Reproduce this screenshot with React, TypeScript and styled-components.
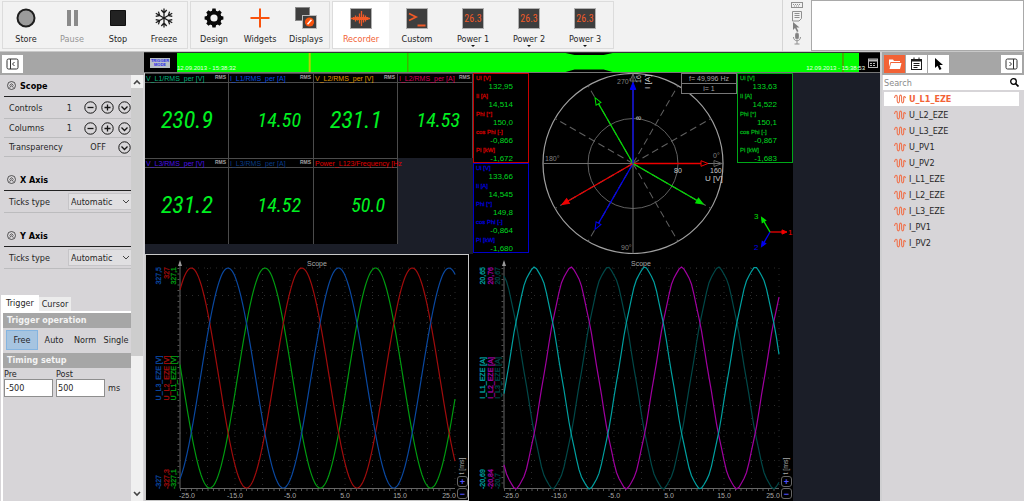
import React from "react";
import styled, { createGlobalStyle, css } from "styled-components";

const ui = `"DejaVu Sans Condensed", "DejaVu Sans", sans-serif`;
const plot = `"Liberation Sans", Arial, sans-serif`;

const Global = createGlobalStyle`
  * { box-sizing: border-box; }
  body { margin: 0; background: #cfcfd1; font-family: ${ui}; font-size: 9px; color: #262626; }
  button, input, select { font: inherit; color: inherit; margin: 0; padding: 0; border: 0; background: none; border-radius: 0; }
  svg { display: block; }
`;

const Page = styled.div`
  display: flex;
  flex-direction: column;
  min-height: 100vh;
`;

/* ---------- top toolbar ---------- */
const Toolbar = styled.header`
  display: flex;
  height: 51px;
  gap: 2px;
  padding: 0 0 0 2px;
  background: #f2f2f2;
`;
const ToolGroup = styled.div`
  display: flex;
  height: 48px;
  margin-top: 1px;
  border: 1px solid #dcdcdc;
`;
const Tool = styled.button<{ $wide?: boolean; $active?: boolean; $dim?: boolean }>`
  position: relative;
  display: flex;
  flex-direction: column;
  align-items: center;
  gap: 3px;
  width: ${(p) => (p.$wide ? 56 : 46)}px;
  padding-top: 4px;
  line-height: 12px;
  color: ${(p) => (p.$active ? "#f26236" : p.$dim ? "#949494" : "#262626")};
  background: ${(p) => (p.$active ? "#fff" : "transparent")};
`;
const Caret = styled.span`
  position: absolute;
  bottom: 1px;
  border: 2px solid transparent;
  border-top-color: #111;
  border-bottom: 0;
`;
const ToolSide = styled.div`
  display: flex;
  flex-direction: column;
  align-items: center;
  width: 28px;
  margin-left: auto;
  border-left: 1px solid #d5d5d5;
`;
const NoteBox = styled.div`
  width: 213px;
  margin-left: -1px;
  background: #fff;
  border: 1px solid #a9a9a9;
`;

/* ---------- shell ---------- */
const Body = styled.div`
  display: flex;
  flex: 1;
  border-top: 1px solid #c8c8c8;
`;
const PanelHead = styled.div`
  display: flex;
  align-items: center;
  gap: 1px;
  height: 23px;
  padding: 0 2px;
  background: #a6a6a6;
`;
const HeadButton = styled.button<{ $on?: boolean; $end?: boolean }>`
  display: grid;
  place-items: center;
  width: 21px;
  height: 18px;
  background: ${(p) => (p.$on ? "#f26236" : "#fff")};
  margin-left: ${(p) => (p.$end ? "auto" : 0)};
`;

/* ---------- left panel ---------- */
const Left = styled.aside`
  display: flex;
  flex-direction: column;
  width: 144px;
  background: #d7d5d8;
`;
const LeftBody = styled.div`
  display: flex;
  flex: 1;
`;
const Settings = styled.div`
  width: 131px;
`;
const Section = styled.section`
  margin: 0 0 12px 4px;
`;
const SectionTitle = styled.h2`
  display: flex;
  align-items: center;
  gap: 4px;
  height: 22px;
  margin: 0;
  padding-left: 3px;
  font-size: 9px;
  font-weight: bold;
  color: #000;
  border-bottom: 1px solid #222;
`;
const Row = styled.div`
  display: flex;
  align-items: center;
  gap: 4px;
  height: 19px;
  padding-left: 5px;
  border-bottom: 1px solid #bcbcbe;
  &:first-of-type { height: 22px; }
`;
const Label = styled.label`
  flex: 1;
`;
const Amount = styled.span`
  margin-right: 8px;
`;
const Round = styled.button`
  width: 13px;
  height: 13px;
`;
const SelectWrap = styled.span`
  display: flex;
  align-items: center;
  width: 63px;
  height: 17px;
  padding-right: 1px;
  background: #e0dfe1;
  border: 1px solid #c6c5c8;
  border-right: 0;
`;
const Select = styled.select`
  flex: 1;
  width: 50px;
  appearance: none;
  padding-left: 2px;
`;
const Tabs = styled.div`
  display: flex;
  align-items: flex-end;
  height: 32px;
  margin-left: 1px;
  border-bottom: 2px solid #fff;
`;
const Tab = styled.button<{ $on?: boolean }>`
  width: ${(p) => (p.$on ? 38 : 32)}px;
  height: ${(p) => (p.$on ? 16 : 14)}px;
  background: ${(p) => (p.$on ? "#fff" : "#ececec")};
`;
const TabBody = styled.div`
  height: 188px;
  margin-left: 1px;
  border-left: 2px solid #fff;
`;
const Bar = styled.h3`
  margin: 0;
  padding-left: 4px;
  height: 15px;
  line-height: 15px;
  font-size: 9px;
  font-weight: bold;
  color: #f3f3f3;
  background: #a6a6a6;
`;
const Modes = styled.div`
  display: flex;
  gap: 1px;
  padding: 2px 0 3px 3px;
`;
const Mode = styled.button<{ $on?: boolean }>`
  width: ${(p) => (p.$on ? 32 : 30)}px;
  height: 20px;
  ${(p) => p.$on && css`background: #a6c4e0; border: 1px solid #84b4e0;`}
`;
const Times = styled.div`
  display: flex;
  align-items: flex-end;
  gap: 3px;
  padding: 2px 0 0 1px;
`;
const Field = styled.label`
  display: flex;
  flex-direction: column;
  line-height: 9px;
`;
const TextBox = styled.input`
  && {
    width: 49px;
    height: 18px;
    padding-left: 1px;
    background: #fff;
    border: 1px solid #8e8e8e;
  }
`;
const Unit = styled.span`
  line-height: 17px;
`;
const Scroll = styled.div`
  display: flex;
  flex-direction: column;
  align-items: center;
  justify-content: space-between;
  width: 12px;
  padding: 4px 0;
  background: linear-gradient(#f0f0f0 13px, #cdcdcd 13px 281px, #f0f0f0 281px);
`;

/* ---------- centre ---------- */
const Center = styled.main`
  flex: 1;
  min-width: 0;
  display: flex;
  flex-direction: column;
  margin-left: 1px;
  background: #1b1e28;
  font-family: ${plot};
`;
const Overview = styled.div`
  display: flex;
  height: 21px;
  margin-left: -1px;
  background: #000;
  border-bottom: 1px solid #777;
  border-top: 1px solid #333;
`;
const Trigger = styled.button`
  width: 20px;
  height: 10px;
  margin: 5px 7px 0 6px;
  font: bold 4px/4px ${plot};
  color: #2525e6;
  background: #b8c0c4;
`;
const Track = styled.div`
  position: relative;
  flex: 1;
  height: 19px;
  margin-right: 6px;
  svg { width: 100%; height: 19px; }
`;
const Stamp = styled.time<{ $right?: boolean }>`
  position: absolute;
  bottom: 1px;
  ${(p) => (p.$right ? "right: -6px;" : "left: 0;")}
  font-size: 6px;
  line-height: 6px;
  color: #e8ffe8;
`;
const Calendar = styled.button`
  display: grid;
  place-items: center;
  width: 15px;
`;
const TopRow = styled.div`
  display: grid;
  grid-template-columns: 328fr 320fr 87fr;
`;
const ScopeRow = styled.div`
  display: grid;
  grid-template-columns: 324fr 324fr 87fr;
`;
const Meters = styled.div`
  display: grid;
  grid-template-columns: 84fr 85fr 84fr 75fr;
  grid-template-rows: 85px 86px;
`;
const Meter = styled.div`
  min-width: 0;
  background: #000;
  border: 1px solid #4b4b4b;
  border-width: 1px 1px 0 0;
`;
const MeterHead = styled.div<{ $c: string }>`
  display: flex;
  justify-content: space-between;
  height: 9px;
  padding: 0 2px 0 1px;
  font-size: 7px;
  line-height: 9px;
  white-space: nowrap;
  color: ${(p) => p.$c};
  border-bottom: 1px solid #4b4b4b;
`;
const Rms = styled.span`
  font: bold 5px/7px ${plot};
  color: #a2a2a2;
`;
const Reading = styled.output<{ $big?: boolean }>`
  display: block;
  padding: 24px ${(p) => (p.$big ? 15 : 12)}px 0 0;
  text-align: right;
  font: italic 400 ${(p) => (p.$big ? 24 : 20)}px/26px "Roboto Condensed", "Liberation Sans Narrow", Roboto, sans-serif;
  color: #00f020;
`;
const Phasors = styled.div`
  display: flex;
  background: #000;
`;
const PhiColumn = styled.div`
  width: 56px;
`;
const Phi = styled.dl<{ $c: string }>`
  margin: 0;
  height: 90px;
  padding-left: 2px;
  border: 1px solid ${(p) => p.$c};
  dt { font-size: 6px; line-height: 8px; color: ${(p) => p.$c}; -webkit-text-stroke: 0.3px ${(p) => p.$c}; }
  dd { margin: 0; padding-right: 15px; text-align: right; font-size: 8px; line-height: 10px; color: #00d820; }
`;
const Polar = styled.div`
  position: relative;
  flex: 1;
  svg { width: 100%; }
`;
const Info = styled.div`
  position: absolute;
  top: 0;
  right: 0;
  width: 56px;
  background: #000;
  font-size: 7px;
  line-height: 9px;
  text-align: center;
  color: #a4a4a4;
  border: 1px solid #777;
  div + div { border-top: 1px solid #777; }
`;
const ScopeBox = styled.figure<{ $framed?: boolean }>`
  position: relative;
  margin: 0;
  background: #000;
  outline: ${(p) => (p.$framed ? "1px solid #c8c8c8" : "none")};
  outline-offset: -1px;
  svg { width: 100%; }
`;
const ZoomKeys = styled.div`
  position: absolute;
  right: 1px;
  bottom: 2px;
  display: flex;
  flex-direction: column;
  gap: 1px;
`;
const ZoomKey = styled.button`
  width: 11px;
  height: 11px;
  font: bold 9px/8px ${plot};
  color: #5252ff;
  background: #000;
  border: 1px solid #666;
  border-radius: 3px;
`;

/* ---------- right panel ---------- */
const Right = styled.aside`
  width: 142px;
  margin-left: 2px;
  background: #d7d5d8;
`;
const Search = styled.label`
  display: flex;
  align-items: center;
  height: 15px;
  margin: 0 0 2px 1px;
  padding: 0 5px 0 1px;
  background: #fff;
  input { flex: 1; min-width: 0; outline: 0; }
  input::placeholder { color: #8a8a8a; opacity: 1; }
`;
const Signals = styled.ul`
  margin: 0;
  padding: 0 5px 0 2px;
  list-style: none;
`;
const Signal = styled.li<{ $on?: boolean }>`
  display: flex;
  align-items: center;
  gap: 3px;
  height: 14px;
  margin-bottom: 2px;
  padding-left: 10px;
  ${(p) => p.$on && css`background: #fff; color: #f26236; font-weight: bold;`}
`;

/* ---------- icons ---------- */
const DarkTile = ({ children }: { children: React.ReactNode }) => (
  <svg width="24" height="24" viewBox="0 0 24 24">
    <rect x="1.5" y="2.5" width="21" height="20" fill="#3e3e3e" stroke="#b0b0b0" />
    {children}
  </svg>
);
const icons: Record<string, React.ReactNode> = {
  store: <svg width="24" height="24"><circle cx="12" cy="12" r="8.5" fill="#9b9b9b" stroke="#1e1e1e" strokeWidth="2" /></svg>,
  pause: <svg width="24" height="24"><path d="M7 4h4v16H7zM14 4h4v16h-4z" fill="#8a8a8a" /></svg>,
  stop: <svg width="24" height="24"><path d="M4.500 4.500h15v15h-15z" fill="#222" stroke="#111" /></svg>,
  freeze: (
    <svg width="24" height="24" fill="none" stroke="#1c1c1c" strokeWidth="1.300">
      {[0, 60, 120, 180, 240, 300].map((a) => (
        <path key={a} transform={`rotate(${a} 12 12)`} d="M12 12V2.500M9.300 4l2.700 3L14.700 4" />
      ))}
    </svg>
  ),
  design: (
    <svg width="24" height="24">
      {[0, 45, 90, 135, 180, 225, 270, 315].map((a) => (
        <path key={a} transform={`rotate(${a} 12 12)`} d="M9.800 6l.6-3.400h3.200l.6 3.400z" fill="#080808" />
      ))}
      <circle cx="12" cy="12" r="5.600" fill="none" stroke="#080808" strokeWidth="4" />
    </svg>
  ),
  widgets: <svg width="24" height="24"><path d="M12 2.500v19M2.500 12h19" stroke="#f9520d" strokeWidth="2" /></svg>,
  displays: (
    <svg width="24" height="24">
      <rect x="1.500" y="1.500" width="14" height="13" fill="#3e3e3e" stroke="#888" />
      <rect x="8.500" y="9.500" width="14" height="13" fill="#3e3e3e" stroke="#bbb" />
      <circle cx="15.500" cy="16" r="4.600" fill="#f9520d" />
      <path d="M13.500 18.300l4-4.600" stroke="#fff" strokeWidth="1.500" />
    </svg>
  ),
  recorder: (
    <DarkTile>
      <path
        d="M2 12.500h19M4.500 11v3M6.500 9.500v6M8.500 10.500v4M10.500 7.500v10M12.500 5v15M14.500 8.500v8M16.500 9.500v6M18.500 11v3"
        stroke="#f05a28"
        strokeWidth="1.300"
      />
      <path d="M3 12.500l3-1.500h12l3 1.500-3 1.500H6z" fill="#f05a28" />
    </DarkTile>
  ),
  custom: <DarkTile><path d="M4 7.500l7 3.500-7 3.500M12.500 19.500h8" fill="none" stroke="#f05a28" strokeWidth="1.800" /></DarkTile>,
  power: (
    <DarkTile>
      <text x="12" y="16" textAnchor="middle" fontFamily="Roboto Condensed, Liberation Sans" fontSize="10" fill="#f05a28">26.3</text>
    </DarkTile>
  ),
};

const SidePanelIcon = ({ flip }: { flip?: boolean }) => (
  <svg width="13" height="12" viewBox="0 0 13 12" fill="none" stroke="#333">
    <rect x="1" y="1" width="11" height="10" rx="1.500" />
    <path d={flip ? "M8.500 1v10M4.500 4l2 2-2 2" : "M4.500 1v10M8.500 4l-2 2 2 2"} />
  </svg>
);
const Glyph = ({ d }: { d: string }) => (
  <svg width="13" height="13" fill="none" stroke="#151515" strokeWidth="1.300">
    <circle cx="6.500" cy="6.500" r="5.700" strokeWidth="1" />
    <path d={d} />
  </svg>
);
const MINUS = "M3.500 6.500h6";
const PLUS = "M3.500 6.500h6M6.500 3.500v6";
const DOWN = "M3.500 5.500l3 3 3-3";
const UpMark = () => (
  <svg width="9" height="9" fill="none" stroke="#333" strokeWidth="0.800">
    <circle cx="4.500" cy="4.500" r="4" />
    <path d="M2.500 4.500l2-1.700 2 1.700M2.500 6.500l2-1.700 2 1.700" />
  </svg>
);
const Chevron = ({ up, bold }: { up?: boolean; bold?: boolean }) => (
  <svg width="8" height="6" fill="none" stroke="#444" strokeWidth={bold ? 1.6 : 1}>
    <path d={up ? "M1 5l3-3 3 3" : "M1 1l3 3 3-3"} />
  </svg>
);
const SineIcon = () => (
  <svg width="12" height="10" fill="none" stroke="#f0724c" strokeWidth="1.100">
    <path d="M.5 4C1 .5 3 .5 3.200 3v4c.3 2.500 2 2.500 2.300 0V3C5.800.5 7.300.5 7.600 3v4c.3 2.500 1.800 2.500 2.100 0V3.500C9.900 2 11 2 11.500 4" />
  </svg>
);

/* ---------- drawings ---------- */
type Wave = { name: string; top: string; bottom: string; color: string; peak: number };

const wavePath = (peak: number, rough: boolean) => {
  const pts: string[] = [];
  for (let x = 0; x <= 275; x += rough ? 2.5 : 1) {
    const a = (2 * Math.PI * (x - peak)) / 110.5;
    const wobble = rough ? 0.009 * Math.cos(11 * a) : 0;
    pts.push(`${35 + x},${(124 - 110 * (Math.cos(a) + wobble)).toFixed(1)}`);
  }
  return pts.join(" ");
};

const Scope = ({ waves, framed }: { waves: Wave[]; framed?: boolean }) => (
  <ScopeBox $framed={framed}>
    <svg viewBox="0 0 324 247" fontFamily="Liberation Sans" fontSize="7">
      <g stroke="#2c2c2c" strokeDasharray="1 5">
        {Array.from({ length: 10 }, (_, i) => <path key={i} d={`M${62.5 + i * 27.5} 14V234`} />)}
        {Array.from({ length: 8 }, (_, i) => <path key={i} d={`M35 ${14 + i * 27.5}H310`} />)}
      </g>
      <path d="M35 8V234.500H310" fill="none" stroke="#666" />
      <path d="M33.500 14V234" stroke="#555" strokeWidth="2" strokeDasharray="1 4.500" />
      <path d="M35 236H310" stroke="#555" strokeWidth="2" strokeDasharray="1 4.500" />
      <path d="M35 6l2 6h-4z" fill="#999" />
      <text x="172" y="12" textAnchor="middle" fill="#a8a8a8">Scope</text>
      {[...waves].reverse().map((w) => (
        <polyline key={w.name} points={wavePath(w.peak, !framed)} fill="none" stroke={w.color} strokeWidth="1.200" />
      ))}
      {waves.map((w, i) => (
        <g key={w.name} fill={w.color} stroke={w.color} strokeWidth="0.300" transform={`translate(${16 + i * 7.5} 0)`}>
          <text transform="translate(0 13) rotate(-90)" textAnchor="end">{w.top}</text>
          <text transform="translate(0 124) rotate(-90)" textAnchor="middle">{w.name}</text>
          <text transform="translate(0 235) rotate(-90)">{w.bottom}</text>
        </g>
      ))}
      <g fill="#a8a8a8" textAnchor="middle">
        {["-25.0", "-15.0", "-5.0", "5.0", "15.0", "25.0"].map((t, i) => (
          <text key={t} x={i === 0 ? 42 : i === 5 ? 304 : 35 + i * 55} y="244">{t}</text>
        ))}
        <text transform="translate(319 212) rotate(-90)">t [ms]</text>
      </g>
    </svg>
    <ZoomKeys>
      <ZoomKey aria-label="Zoom in">+</ZoomKey>
      <ZoomKey aria-label="Zoom out">−</ZoomKey>
    </ZoomKeys>
  </ScopeBox>
);

const Arrow = ({ cx, cy, len, angle, color, open, head = 8 }: {
  cx: number; cy: number; len: number; angle: number; color: string; open?: boolean; head?: number;
}) => (
  <g transform={`translate(${cx} ${cy}) rotate(${angle})`} stroke={color}>
    <path d={`M0 0H${len - head}`} strokeWidth="1.300" />
    <path d={`M${len - 1} 0l-${head - 1}-${head * 0.35}v${head * 0.7}z`} fill={open ? "#000" : color} />
  </g>
);

const polarArrows = [
  { len: 76, angle: 0, color: "#f00000", open: true },
  { len: 82, angle: 30, color: "#00e000" },
  { len: 77, angle: 120, color: "#0000f0", open: true },
  { len: 83, angle: 150, color: "#f00000" },
  { len: 77, angle: 240, color: "#00e000", open: true },
  { len: 82, angle: 270, color: "#0000f0" },
];

const PolarPlot = () => (
  <svg viewBox="0 0 208 181" fontFamily="Liberation Sans" fontSize="7">
    <g fill="none" stroke="#606060">
      <circle cx="104" cy="90.500" r="90" stroke="#a0a0a0" strokeWidth="1.200" />
      <circle cx="104" cy="90.500" r="45" />
      <path d="M14 90.500H194M104 .5v180" stroke="#707070" />
      {[30, 60, 120, 150, 210, 240, 300, 330].map((a) => (
        <path key={a} transform={`rotate(${a} 104 90.500)`} d="M104 90.500h90" strokeDasharray="7 4" />
      ))}
      <path d="M193 90.500l-8-3v6zM104 1l-3 7h6z" />
    </g>
    <g fill="#808080">
      <text x="88" y="11">270°</text>
      <text x="16" y="88">180°</text>
      <text x="184" y="85">0°</text>
      <text x="92" y="177">90°</text>
    </g>
    <g fill="#c8c8c8">
      <text x="145" y="100">80</text>
      <text x="181" y="100">160</text>
      <text x="176" y="108" fontSize="8">U [V]</text>
      <text transform="translate(112 10) rotate(-90)">16</text>
      <text transform="translate(112 47) rotate(-90)">8</text>
      <text transform="translate(121 16) rotate(-90)" fontSize="8">I [A]</text>
    </g>
    {polarArrows.map((a) => <Arrow key={a.angle} cx={104} cy={90.5} {...a} />)}
  </svg>
);

const PhiList = ({ color, values }: { color: string; values: string[] }) => (
  <Phi $c={color}>
    {["Ui [V]", "Ii [A]", "Phi [°]", "cos Phi [-]", "Pi [kW]"].map((k, i) => (
      <React.Fragment key={k}>
        <dt>{k}</dt>
        <dd>{values[i]}</dd>
      </React.Fragment>
    ))}
  </Phi>
);

/* ---------- data ---------- */
const meters = [
  { name: "V_L1/RMS_per [V]", color: "#00b47c", value: "230.9" },
  { name: "I_L1/RMS_per [A]", color: "#0a50e0", value: "14.50" },
  { name: "V_L2/RMS_per [V]", color: "#e09a00", value: "231.1" },
  { name: "I_L2/RMS_per [A]", color: "#dc005c", value: "14.53" },
  { name: "V_L3/RMS_per [V]", color: "#4a10e8", value: "231.2" },
  { name: "I_L3/RMS_per [A]", color: "#083c88", value: "14.52" },
  { name: "Power_L123/Frequency [Hz", color: "#e00000", value: "50.0" },
];
const voltages: Wave[] = [
  { name: "U_L3_EZE [V]", top: "327,5", bottom: "-327", color: "#0a48a0", peak: 48 },
  { name: "U_L2_EZE [V]", top: "327", bottom: "-327,3", color: "#a00c0c", peak: 11.3 },
  { name: "U_L1_EZE [V]", top: "327,1", bottom: "-327,1", color: "#009a10", peak: 85 },
];
const currents: Wave[] = [
  { name: "I_L1_EZE [A]", top: "20,65", bottom: "-20,69", color: "#00a0a0", peak: 30.3 },
  { name: "I_L2_EZE [A]", top: "20,76", bottom: "-20,84", color: "#a000a0", peak: 67 },
  { name: "I_L3_EZE [A]", top: "20,67", bottom: "-20,7", color: "#004848", peak: 104 },
];
const signals = ["U_L1_EZE", "U_L2_EZE", "U_L3_EZE", "U_PV1", "U_PV2", "I_L1_EZE", "I_L2_EZE", "I_L3_EZE", "I_PV1", "I_PV2"];

const Axis = ({ name }: { name: string }) => (
  <Section>
    <SectionTitle><UpMark />{name} Axis</SectionTitle>
    <Row>
      <Label htmlFor={`ticks${name}`}>Ticks type</Label>
      <SelectWrap>
        <Select id={`ticks${name}`}><option>Automatic</option></Select>
        <Chevron />
      </SelectWrap>
    </Row>
  </Section>
);

const Stepper = ({ name }: { name: string }) => (
  <Row>
    <Label as="span">{name}</Label>
    <Amount>1</Amount>
    <Round aria-label={`Fewer ${name}`}><Glyph d={MINUS} /></Round>
    <Round aria-label={`More ${name}`}><Glyph d={PLUS} /></Round>
    <Round aria-label={`${name} options`}><Glyph d={DOWN} /></Round>
  </Row>
);

export default function App() {
  return (
    <Page>
      <Global />
      <Toolbar>
        <ToolGroup>
          <Tool>{icons.store}Store</Tool>
          <Tool $dim>{icons.pause}Pause</Tool>
          <Tool>{icons.stop}Stop</Tool>
          <Tool>{icons.freeze}Freeze</Tool>
        </ToolGroup>
        <ToolGroup>
          <Tool>{icons.design}Design</Tool>
          <Tool>{icons.widgets}Widgets</Tool>
          <Tool>{icons.displays}Displays</Tool>
        </ToolGroup>
        <ToolGroup>
          <Tool $wide $active>{icons.recorder}Recorder</Tool>
          <Tool $wide>{icons.custom}Custom</Tool>
          {[1, 2, 3].map((n) => (
            <Tool key={n} $wide>{icons.power}Power {n}<Caret /></Tool>
          ))}
        </ToolGroup>
        <ToolSide>
          <svg width="14" height="46" fill="none" stroke="#909090">
            <rect x="1.500" y="2.500" width="11" height="5" />
            <path d="M3 4.500h8M4 6h6" strokeDasharray="1 1" />
            <path d="M2.500 11.500h9v7l-2.500 2.500h-6.500zM4.500 13.500h5M4.500 15.500h5M4.500 17.500h5" />
            <path d="M3 22v8l2-2 2 4 1.500-.8-2-3.700h3z" fill="#808080" stroke="none" />
            <rect x="5.500" y="33" width="3" height="6" rx="1.500" fill="#808080" />
            <path d="M3.500 37c0 5 7 5 7 0M7 41v3M4.500 44h5" />
          </svg>
        </ToolSide>
        <NoteBox />
      </Toolbar>

      <Body>
        <Left>
          <PanelHead>
            <HeadButton aria-label="Collapse settings"><SidePanelIcon /></HeadButton>
          </PanelHead>
          <LeftBody>
            <Settings>
              <Section>
                <SectionTitle><UpMark />Scope</SectionTitle>
                <Stepper name="Controls" />
                <Stepper name="Columns" />
                <Row>
                  <Label as="span">Transparency</Label>
                  <Amount>OFF</Amount>
                  <Round aria-label="Transparency options"><Glyph d={DOWN} /></Round>
                </Row>
              </Section>
              <Axis name="X" />
              <Axis name="Y" />
              <Tabs>
                <Tab $on>Trigger</Tab>
                <Tab>Cursor</Tab>
              </Tabs>
              <TabBody>
                <Bar>Trigger operation</Bar>
                <Modes>
                  <Mode $on>Free</Mode>
                  <Mode>Auto</Mode>
                  <Mode>Norm</Mode>
                  <Mode>Single</Mode>
                </Modes>
                <Bar>Timing setup</Bar>
                <Times>
                  <Field>Pre<TextBox defaultValue="-500" /></Field>
                  <Field>Post<TextBox defaultValue="500" /></Field>
                  <Unit>ms</Unit>
                </Times>
              </TabBody>
            </Settings>
            <Scroll>
              <Chevron up bold />
              <Chevron bold />
            </Scroll>
          </LeftBody>
        </Left>

        <Center>
          <Overview>
            <Trigger>TRIGGER MODE</Trigger>
            <Track>
              <svg viewBox="0 0 681 19" preserveAspectRatio="none">
                <path d="M0 0H388L397 2H426L435 0H681V19H435L426 16.500H397L388 19H0z" fill="#00ff00" />
                <path d="M132.500 0v19" stroke="#b8d000" strokeWidth="2" />
                <path d="M230.500 0v19" stroke="#5a9000" />
                <path d="M665 0v19" stroke="#8a6000" />
              </svg>
              <Stamp>12.09.2013 - 15:38:32</Stamp>
              <Stamp $right>12.09.2013 - 15:38:53</Stamp>
            </Track>
            <Calendar aria-label="Time range">
              <svg width="10" height="10" fill="none" stroke="#b8b8b8">
                <rect x=".5" y="1" width="9" height="8.500" />
                <path d="M1 2.500h8" strokeWidth="2" />
                <path d="M2 5.500h6M2 7.500h6" strokeDasharray="2 1" />
              </svg>
            </Calendar>
          </Overview>
          <TopRow>
            <Meters>
              {meters.map((m) => (
                <Meter key={m.name}>
                  <MeterHead $c={m.color}>
                    {m.name}
                    {m.value !== "50.0" && <Rms>RMS</Rms>}
                  </MeterHead>
                  <Reading $big={m.name.startsWith("V")}>{m.value}</Reading>
                </Meter>
              ))}
            </Meters>
            <Phasors>
              <PhiColumn>
                <PhiList color="#c80000" values={["132,95", "14,514", "150,0", "-0,866", "-1,672"]} />
                <PhiList color="#0000cc" values={["133,66", "14,545", "149,8", "-0,864", "-1,680"]} />
              </PhiColumn>
              <Polar>
                <PolarPlot />
                <Info>
                  <div>f= 49,996 Hz</div>
                  <div>i= 1</div>
                </Info>
              </Polar>
              <PhiColumn>
                <PhiList color="#00a818" values={["133,63", "14,522", "150,1", "-0,867", "-1,683"]} />
                <svg width="56" height="91" fontFamily="Liberation Sans" fontSize="8">
                  <Arrow cx={33} cy={69} len={18} angle={0} color="#f00000" head={6} />
                  <Arrow cx={33} cy={69} len={18} angle={120} color="#0000f0" head={6} />
                  <Arrow cx={33} cy={69} len={18} angle={240} color="#00e000" head={6} />
                  <text x="51" y="72" fill="#f00000">1</text>
                  <text x="17" y="87" fill="#0000f0">2</text>
                  <text x="17" y="56" fill="#00e000">3</text>
                </svg>
              </PhiColumn>
            </Phasors>
          </TopRow>
          <ScopeRow>
            <Scope waves={voltages} framed />
            <Scope waves={currents} />
          </ScopeRow>
        </Center>

        <Right>
          <PanelHead>
            <HeadButton $on aria-label="Channels">
              <svg width="14" height="12" fill="#fff"><path d="M1 4V1.500h4l1 1.500h6v1H2.500L1 9zM3 5h10.500L12 11H1.500z" /></svg>
            </HeadButton>
            <HeadButton aria-label="Events">
              <svg width="13" height="13" fill="none" stroke="#1a1a1a">
                <rect x="1.500" y="2.500" width="10" height="10" />
                <path d="M1 3.500h11" strokeWidth="2" />
                <path d="M4 .5v3M9 .5v3M3.500 6.500h6M3.500 8.500h6M3.500 10.500h4" />
              </svg>
            </HeadButton>
            <HeadButton aria-label="Select">
              <svg width="10" height="14"><path d="M1 1v10l2.500-2.300L5.500 13l2-1-2-4H9z" fill="#000" /></svg>
            </HeadButton>
            <HeadButton $end aria-label="Collapse channels"><SidePanelIcon flip /></HeadButton>
          </PanelHead>
          <Search>
            <input placeholder="Search" aria-label="Search" />
            <svg width="9" height="9" fill="none" stroke="#000"><circle cx="3.500" cy="3.500" r="2.800" strokeWidth="1.300" /><path d="M5.500 5.500l3 3" strokeWidth="1.700" /></svg>
          </Search>
          <Signals>
            {signals.map((s, i) => (
              <Signal key={s} $on={i === 0}><SineIcon />{s}</Signal>
            ))}
          </Signals>
        </Right>
      </Body>
    </Page>
  );
}
